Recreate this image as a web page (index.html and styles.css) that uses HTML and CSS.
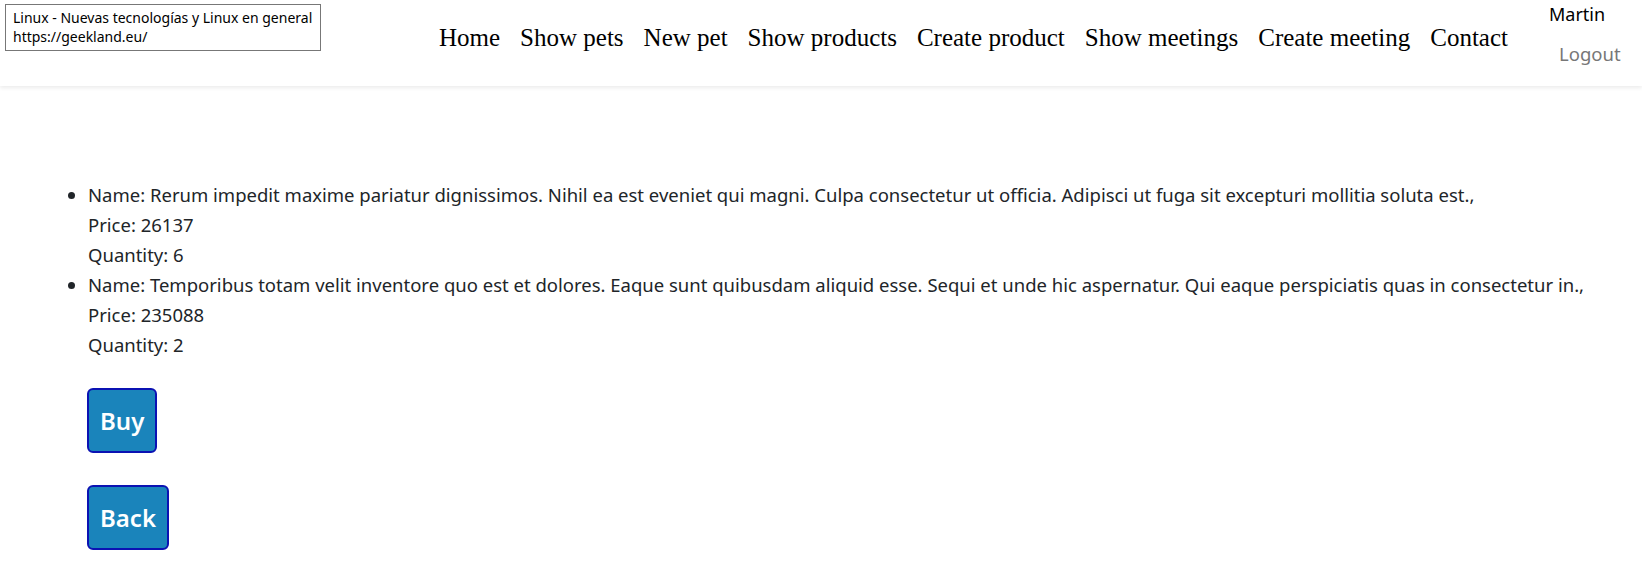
FILE: index.html
```html
<!DOCTYPE html>
<html>
<head>
<meta charset="utf-8">
<link rel="stylesheet" href="styles.css">
</head>
<body>
<header class="topbar">
  <div class="brand">
    <div>Linux - Nuevas tecnologías y Linux en general</div>
    <div>https://geekland.eu/</div>
  </div>
  <nav class="nav">
    <a class="nav-link">Home</a>
    <a class="nav-link">Show pets</a>
    <a class="nav-link">New pet</a>
    <a class="nav-link">Show products</a>
    <a class="nav-link">Create product</a>
    <a class="nav-link">Show meetings</a>
    <a class="nav-link">Create meeting</a>
    <a class="nav-link">Contact</a>
  </nav>
  <div class="user">
    <span class="user-name">Martin</span>
    <a class="logout">Logout</a>
  </div>
</header>
<main class="content">
  <ul class="products">
    <li>Name: Rerum impedit maxime pariatur dignissimos. Nihil ea est eveniet qui magni. Culpa consectetur ut officia. Adipisci ut fuga sit excepturi mollitia soluta est.,<br>Price: 26137<br>Quantity: 6</li>
    <li>Name: Temporibus totam velit inventore quo est et dolores. Eaque sunt quibusdam aliquid esse. Sequi et unde hic aspernatur. Qui eaque perspiciatis quas in consectetur in.,<br>Price: 235088<br>Quantity: 2</li>
  </ul>
  <div class="actions">
    <button class="btn">Buy</button>
    <button class="btn">Back</button>
  </div>
</main>
</body>
</html>
```
FILE: styles.css
```css
html, body {
  margin: 0;
  padding: 0;
  background: #fff;
}
body {
  font-family: "Noto Sans", "Open Sans", sans-serif;
  color: #212529;
}
.topbar {
  height: 86px;
  display: flex;
  align-items: flex-start;
  box-shadow: 0 2px 4px rgba(0,0,0,0.08);
  box-sizing: border-box;
  padding: 4px 0 0 5px;
}
.brand {
  border: 1px solid #777;
  padding: 3px 7px 4px 7px;
  font-size: 14px;
  line-height: 19px;
  color: #000;
  white-space: nowrap;
  width: 316px;
  box-sizing: border-box;
}
.nav {
  display: flex;
  gap: 20px;
  margin-left: 118px;
  margin-top: 19px;
}
.nav-link {
  font-family: "Liberation Serif", serif;
  font-size: 25px;
  line-height: 30px;
  color: #000;
  text-decoration: none;
}
.user {
  display: flex;
  flex-direction: column;
  align-items: flex-start;
  margin-left: 41px;
}
.user-name {
  color: #000;
  font-size: 18px;
  line-height: 20px;
}
.logout {
  color: #777;
  font-size: 18.5px;
  margin-top: 20px;
  line-height: 20px;
  padding-left: 10px;
}
.content {
  padding-top: 94px;
}
.products {
  margin: 0 0 0 48px;
  padding-left: 40px;
  font-size: 18.5px;
  line-height: 30px;
}
.actions {
  display: flex;
  flex-direction: column;
  align-items: flex-start;
  gap: 32px;
  margin: 28px 0 0 87px;
}
.btn {
  font-family: "Noto Sans", "Open Sans", sans-serif;
  font-weight: 600;
  font-size: 24px;
  color: #fff;
  background: #1a84bb;
  border: 2px solid #0b12b3;
  border-radius: 6px;
  padding: 0 11px;
  height: 65px;
}
```
